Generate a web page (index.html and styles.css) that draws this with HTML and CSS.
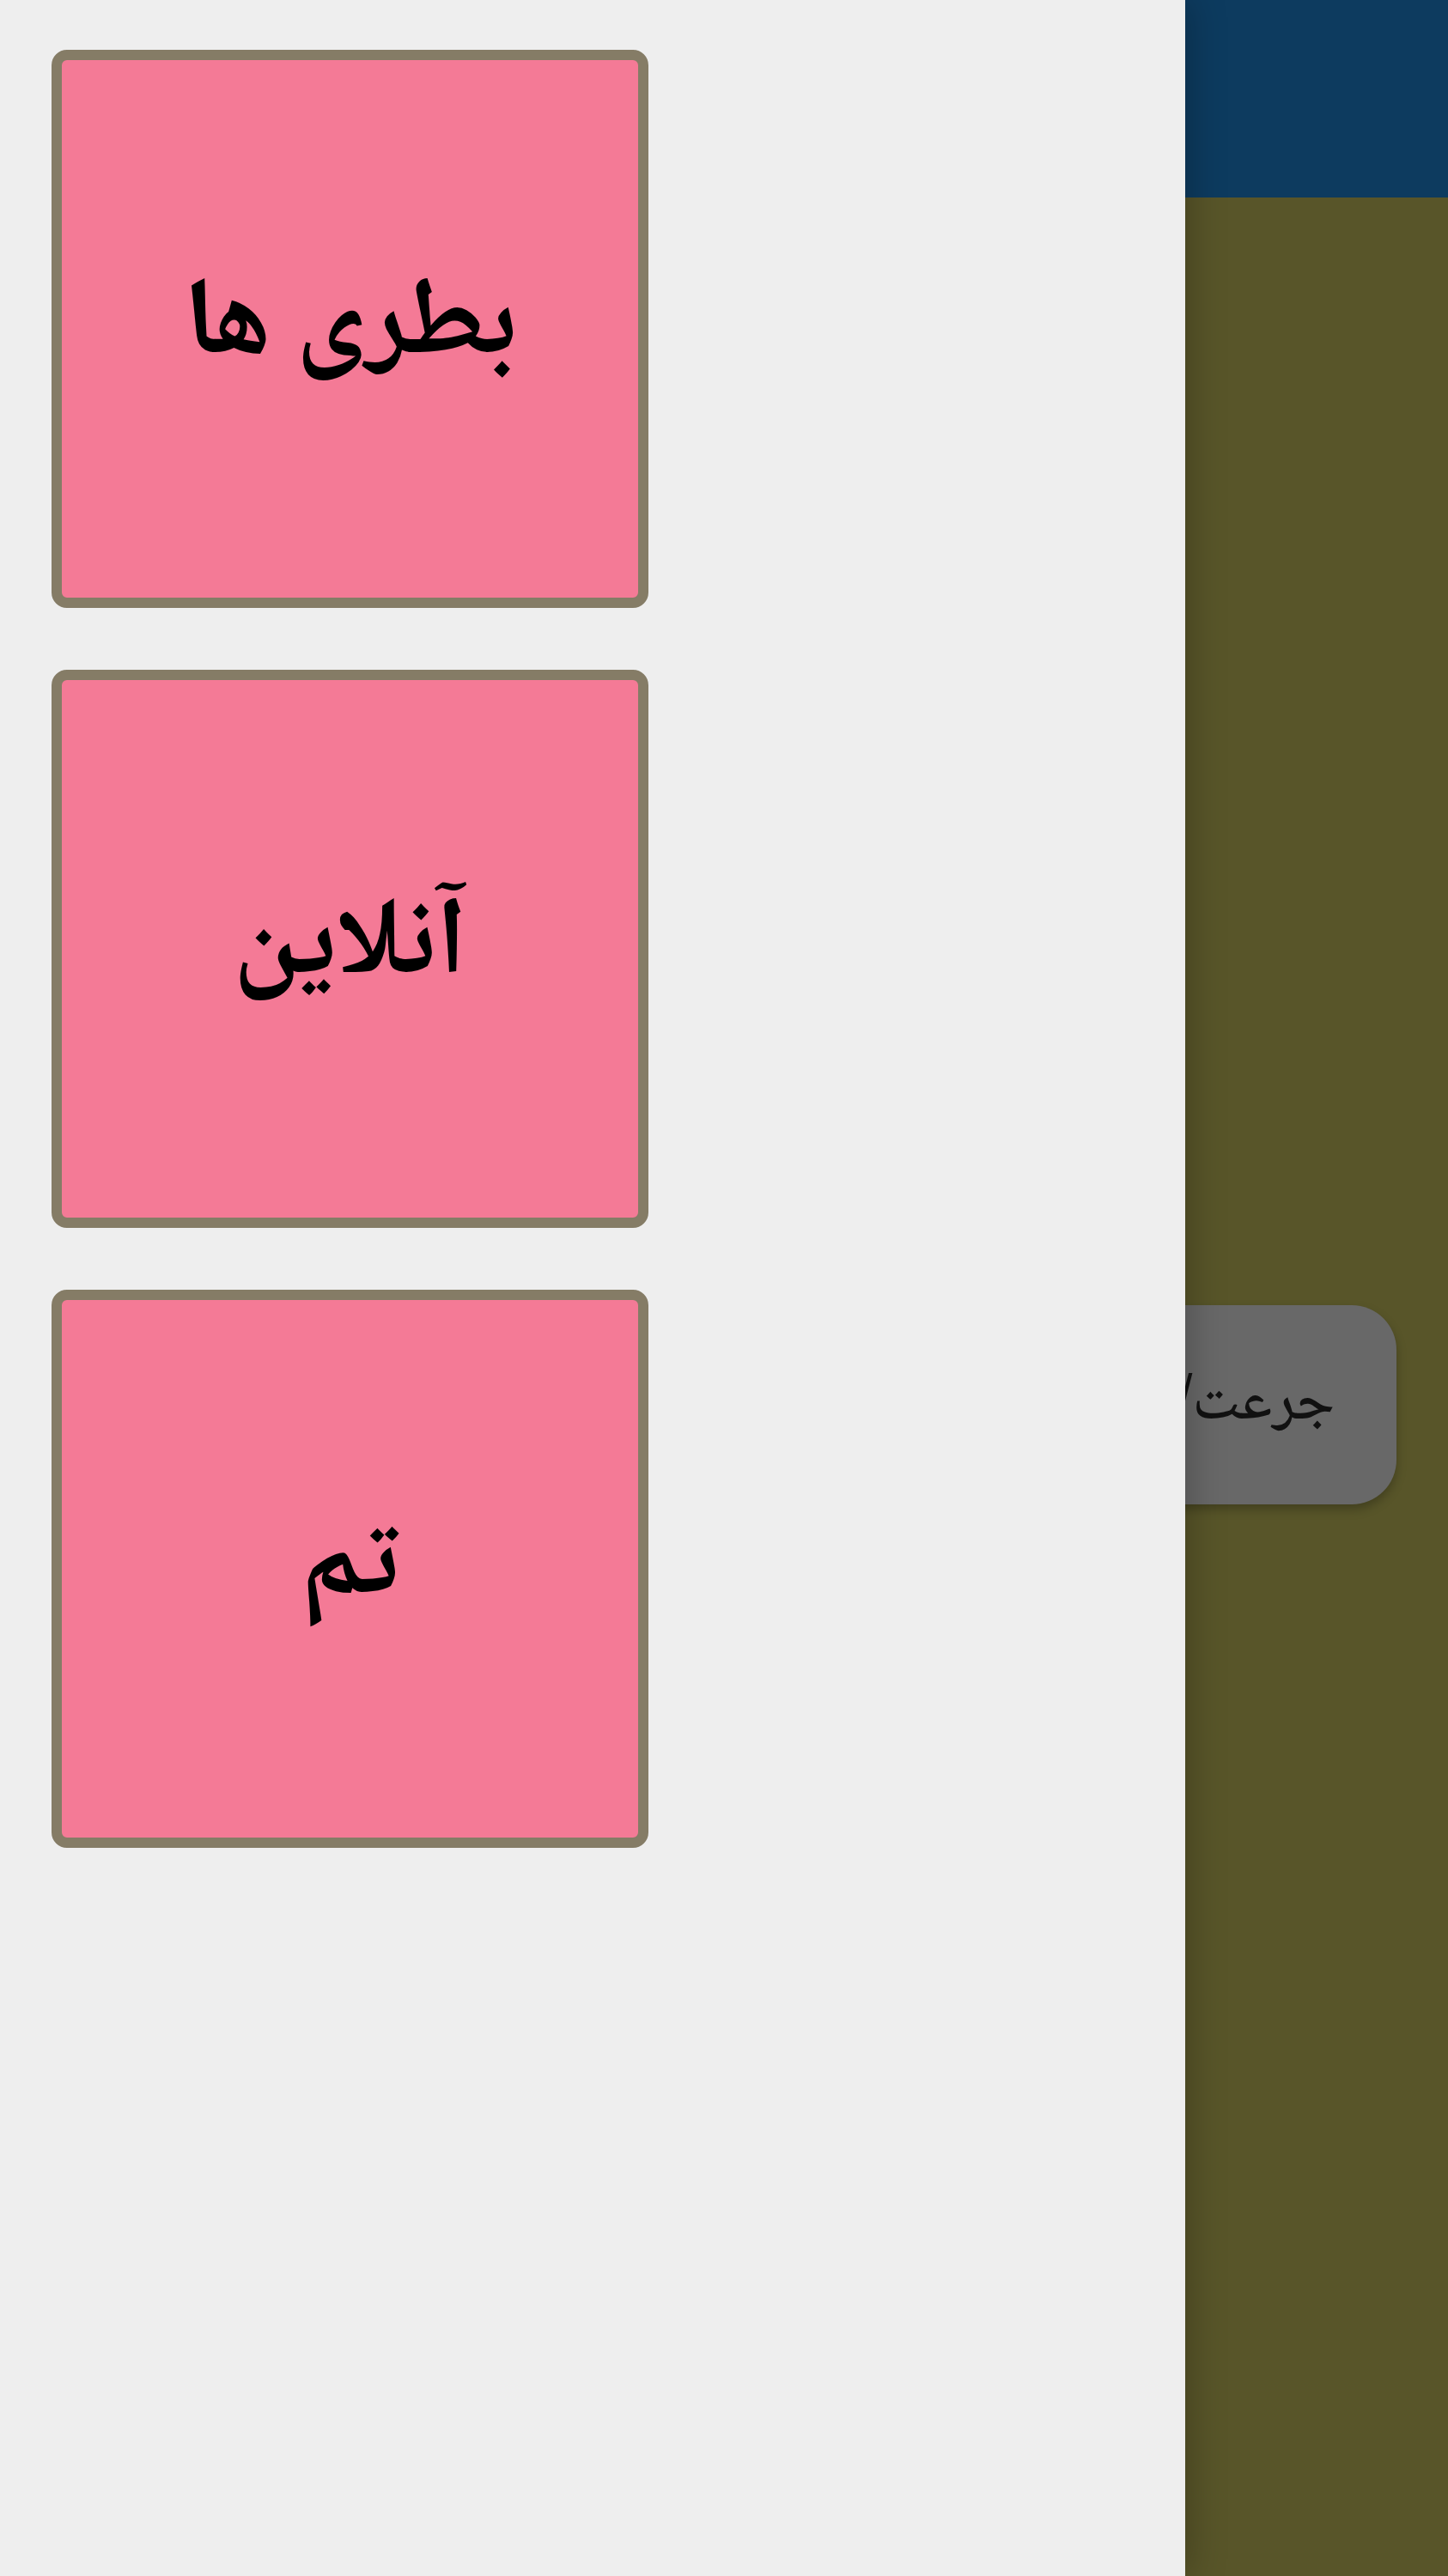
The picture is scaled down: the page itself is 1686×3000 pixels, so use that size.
FILE: index.html
```html
<!DOCTYPE html>
<html lang="fa" dir="ltr">
<head>
<meta charset="utf-8">
<title>منو</title>
<link rel="stylesheet" href="styles.css">
</head>
<body>
<div class="app">
  <header class="topbar"></header>
  <main class="content">
    <button class="pill" dir="rtl">جرعت/حقیقت</button>
  </main>
</div>
<nav class="drawer">
  <div class="card" dir="rtl"><span>بطری ها</span></div>
  <div class="card" dir="rtl"><span>آنلاین</span></div>
  <div class="card" dir="rtl"><span>تم</span></div>
</nav>
</body>
</html>
```
FILE: styles.css
```css
html, body {
  margin: 0;
  padding: 0;
}
body {
  width: 1686px;
  height: 3000px;
  overflow: hidden;
  position: relative;
  font-family: "Noto Naskh Arabic", "Noto Sans Arabic", "DejaVu Sans", sans-serif;
  background: #585529;
}
.app {
  display: flex;
  flex-direction: column;
  height: 3000px;
}
.topbar {
  height: 230px;
  background: #0d3b5f;
  flex: none;
}
.content {
  flex: 1;
  background: #585529;
  display: flex;
  flex-direction: column;
  align-items: flex-end;
  padding-top: 1290px;
  padding-right: 60px;
}
.pill {
  width: 760px;
  height: 232px;
  border: none;
  border-radius: 52px;
  background: #686868;
  color: #111;
  font-family: "Noto Naskh Arabic", "Noto Sans Arabic", "DejaVu Sans", sans-serif;
  font-size: 70px;
  font-weight: 500;
  text-align: right;
  padding: 0 72px 0 20px;
  box-shadow: 0 6px 12px rgba(0,0,0,0.25);
}
.drawer {
  position: absolute;
  left: 0;
  top: 0;
  width: 1380px;
  height: 3000px;
  background: #eeeeee;
  box-sizing: border-box;
  padding: 58px 0 0 60px;
  display: flex;
  flex-direction: column;
  gap: 72px;
  box-shadow: 4px 0 40px rgba(0,0,0,0.25);
}
.card {
  width: 695px;
  height: 650px;
  box-sizing: border-box;
  border: 12px solid #857c66;
  border-radius: 18px;
  background: #f47a96;
  display: flex;
  align-items: center;
  justify-content: center;
  font-size: 128px;
  font-weight: bold;
  color: #000;
}
```
